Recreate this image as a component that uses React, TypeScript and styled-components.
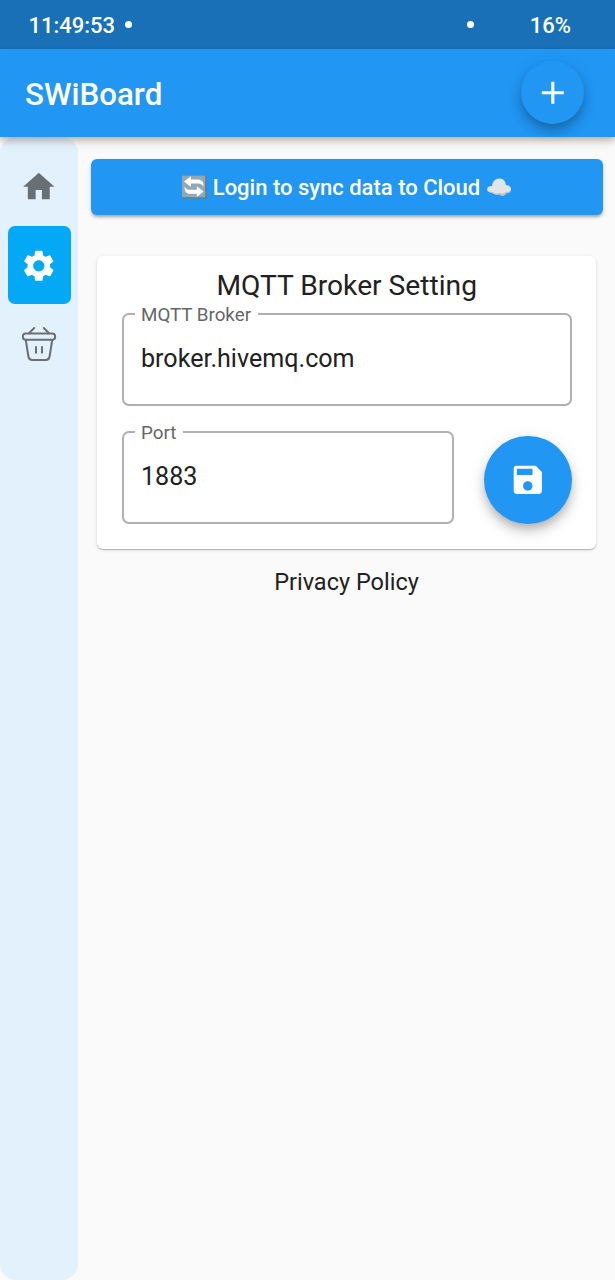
import React from "react";
import styled, { createGlobalStyle } from "styled-components";
import { MdAdd, MdHome, MdSave, MdSettings } from "react-icons/md";

const GlobalStyle = createGlobalStyle`
  * { box-sizing: border-box; }
  body { margin: 0; background: #fafafa; font-family: Roboto, "Noto Sans", sans-serif; color: #212121; }
`;

const Screen = styled.div`
  display: flex;
  flex-direction: column;
  height: 1280px;
  overflow: hidden;
`;

const StatusBar = styled.div`
  flex: none;
  height: 49px;
  padding: 1px 44px 0 28.5px;
  display: flex;
  align-items: center;
  background: #1a70b7;
  color: #fff;
  font-size: 22px;
  font-weight: 500;
`;

const Dot = styled.span<{ $push?: boolean }>`
  width: 7px;
  height: 7px;
  border-radius: 50%;
  background: #fff;
  margin-left: ${(p) => (p.$push ? "auto" : "9.5px")};
  margin-right: ${(p) => (p.$push ? "56px" : "0")};
  margin-bottom: ${(p) => (p.$push ? "2px" : "1px")};
`;

const AppBar = styled.header`
  position: relative;
  z-index: 1;
  flex: none;
  height: 88px;
  padding: 0 31px 1px 25px;
  display: flex;
  align-items: center;
  justify-content: space-between;
  background: #2196f3;
  color: #fff;
  box-shadow: 0 3px 6px rgba(0, 0, 0, 0.2), 0 6px 10px rgba(0, 0, 0, 0.1);
`;

const Title = styled.h1`
  margin: 3px 0 0;
  font-size: 31.3px;
  font-weight: 500;
`;

const RoundButton = styled.button<{ $size: number }>`
  flex: none;
  width: ${(p) => p.$size}px;
  height: ${(p) => p.$size}px;
  padding: 0;
  border: 0;
  border-radius: 50%;
  display: flex;
  align-items: center;
  justify-content: center;
  background: #2196f3;
  color: #fff;
  font-size: 37.6px;
  box-shadow: 0 5px 8px -1px rgba(0, 0, 0, 0.18), 0 9px 14px rgba(0, 0, 0, 0.12),
    0 2px 20px rgba(0, 0, 0, 0.06);
`;

const Body = styled.div`
  flex: 1;
  display: flex;
`;

const SideNav = styled.nav`
  width: 78px;
  padding: 10px 7px 0 8px;
  border-radius: 16px;
  background: #e3f1fd;
`;

const NavItem = styled.button<{ $active?: boolean }>`
  width: 62.5px;
  height: 78.5px;
  padding: 2px 0 0;
  border: 0;
  border-radius: 7px;
  display: flex;
  align-items: center;
  justify-content: center;
  background: ${(p) => (p.$active ? "#03a9f4" : "transparent")};
  color: ${(p) => (p.$active ? "#fff" : "#697075")};
  font-size: 37.6px;
`;

const Content = styled.main`
  flex: 1;
  padding: 22px 12px 0 13px;
  display: flex;
  flex-direction: column;
`;

const SyncButton = styled.button`
  height: 56px;
  border: 0;
  border-radius: 6px;
  padding: 0 1px 0 0;
  display: flex;
  align-items: center;
  justify-content: center;
  gap: 6px;
  background: #2196f3;
  color: #fff;
  font: 500 22px Roboto, sans-serif;
  box-shadow: 0 3px 3px -1px rgba(0, 0, 0, 0.22), 0 2px 4px rgba(0, 0, 0, 0.16);
`;

const Card = styled.section`
  margin: 41px 7px 0 6px;
  height: 293px;
  padding: 13px 24.5px 0 25px;
  border-radius: 6px;
  background: #fff;
  box-shadow: 0 1px 1px rgba(0, 0, 0, 0.24), 0 1px 4px rgba(0, 0, 0, 0.1);
`;

const CardTitle = styled.h2`
  margin: 0;
  text-align: center;
  font-size: 28.2px;
  line-height: 34px;
  font-weight: 400;
`;

const FieldBox = styled.fieldset<{ $width: number }>`
  width: ${(p) => p.$width}px;
  height: 103px;
  min-width: 0;
  margin: 0;
  padding: 0 11px;
  border: 2px solid #b0b0b0;
  border-radius: 7px;
`;

const FieldLabel = styled.legend`
  height: 22px;
  padding: 1px 7px 0 6px;
  font-size: 18.8px;
  line-height: 22px;
  color: #666;
`;

const FieldInput = styled.input`
  display: block;
  width: 100%;
  height: 34px;
  margin-top: 16px;
  padding: 0 6px;
  border: 0;
  outline: 0;
  background: transparent;
  font: 400 25.1px Roboto, sans-serif;
  color: #212121;
`;

const PortRow = styled.div`
  margin-top: 15px;
  display: flex;
  justify-content: space-between;
  align-items: flex-end;
`;

const PolicyLink = styled.a`
  margin-top: 18px;
  margin-right: 1px;
  align-self: center;
  font-size: 23.5px;
  line-height: 30px;
`;

const BasketIcon = () => (
  <svg width="36" height="36" viewBox="0 0 36 36" fill="none" stroke="currentColor" strokeWidth="2" strokeLinecap="round" strokeLinejoin="round">
    <rect x="1.9" y="7.4" width="32.2" height="6.4" rx="2.8" />
    <path d="M8 7.200 13.200 2M28 7.200 22.800 2" />
    <path d="M4.800 14 7.400 30.500C7.800 32.800 9 34 11.300 34h13.400c2.300 0 3.500-1.200 3.900-3.500L31.200 14" />
    <path d="M15 21v5.800M21 21v5.800" />
  </svg>
);

const SyncEmoji = () => (
  <svg width="26" height="24" viewBox="0 0 26 24">
    <rect x="1" y="0.5" width="24.5" height="23" rx="1" fill="#607d8b" />
    <rect x="1" y="0.5" width="23.2" height="21.8" rx="1" fill="#90a9b5" />
    <path d="M3 6.600 10 1.200v3.200h6.500c4 0 6 2.200 6 5.600v1.600c-1.400-2.400-3-3.200-5.600-3.200H10V12z" fill="#fff" />
    <path d="M22.600 16.600 15.800 22v-3.200H9.600c-4 0-6-2.200-6-5.600v-1.800c1.400 2.500 3 3.300 5.600 3.300h6.600V11.200z" fill="#fff" />
  </svg>
);

const CloudEmoji = () => (
  <svg width="26" height="20" viewBox="0 0 26 20">
    <path d="M5.5 15.500C2.600 15.500 1 14.300 1 12.300c0-2.200 2-3.400 5-3.400C6.600 4.500 9.500 1.500 13.300 1.500c4 0 6.200 2.600 6.500 6.400 3.200.2 5.200 1.900 5.200 4.300 0 2.600-2.100 4-4.700 4-.9 1.500-2.200 2.300-4 2.300-1.400 0-2.300-.5-3-1.300-2.400.8-5 .4-7.800-1.700z" fill="#e2e4e6" />
    <path d="M1 12.300c0 2 1.600 3.200 4.500 3.200 2.800 2.100 5.400 2.500 7.800 1.700.7.8 1.600 1.300 3 1.300 1.800 0 3.100-.8 4-2.300 2.600 0 4.700-1.400 4.700-4-1 2.400-3 3.200-5.400 2.900-1.400 1.500-3.900 1.800-5.600.8-2.600 1-5.800.8-7.800-.8C4.200 15 2 14.300 1 12.300z" fill="#bfc4c9" />
  </svg>
);

interface FieldProps {
  label: string;
  value: string;
  width: number;
}

const Field = ({ label, value, width }: FieldProps) => (
  <FieldBox $width={width}>
    <FieldLabel>{label}</FieldLabel>
    <FieldInput defaultValue={value} aria-label={label} />
  </FieldBox>
);

export default function App() {
  return (
    <Screen>
      <GlobalStyle />
      <StatusBar>
        <span>11:49:53</span>
        <Dot />
        <Dot $push />
        <span>16%</span>
      </StatusBar>
      <AppBar>
        <Title>SWiBoard</Title>
        <RoundButton $size={63} aria-label="Add"><MdAdd /></RoundButton>
      </AppBar>
      <Body>
        <SideNav>
          <NavItem aria-label="Home"><MdHome /></NavItem>
          <NavItem $active aria-label="Settings"><MdSettings /></NavItem>
          <NavItem aria-label="Store"><BasketIcon /></NavItem>
        </SideNav>
        <Content>
          <SyncButton>
            <SyncEmoji />
            <span>Login to sync data to Cloud</span>
            <CloudEmoji />
          </SyncButton>
          <Card>
            <CardTitle>MQTT Broker Setting</CardTitle>
            <Field label="MQTT Broker" value="broker.hivemq.com" width={449.5} />
            <PortRow>
              <Field label="Port" value="1883" width={332} />
              <RoundButton $size={88} aria-label="Save"><MdSave /></RoundButton>
            </PortRow>
          </Card>
          <PolicyLink>Privacy Policy</PolicyLink>
        </Content>
      </Body>
    </Screen>
  );
}
